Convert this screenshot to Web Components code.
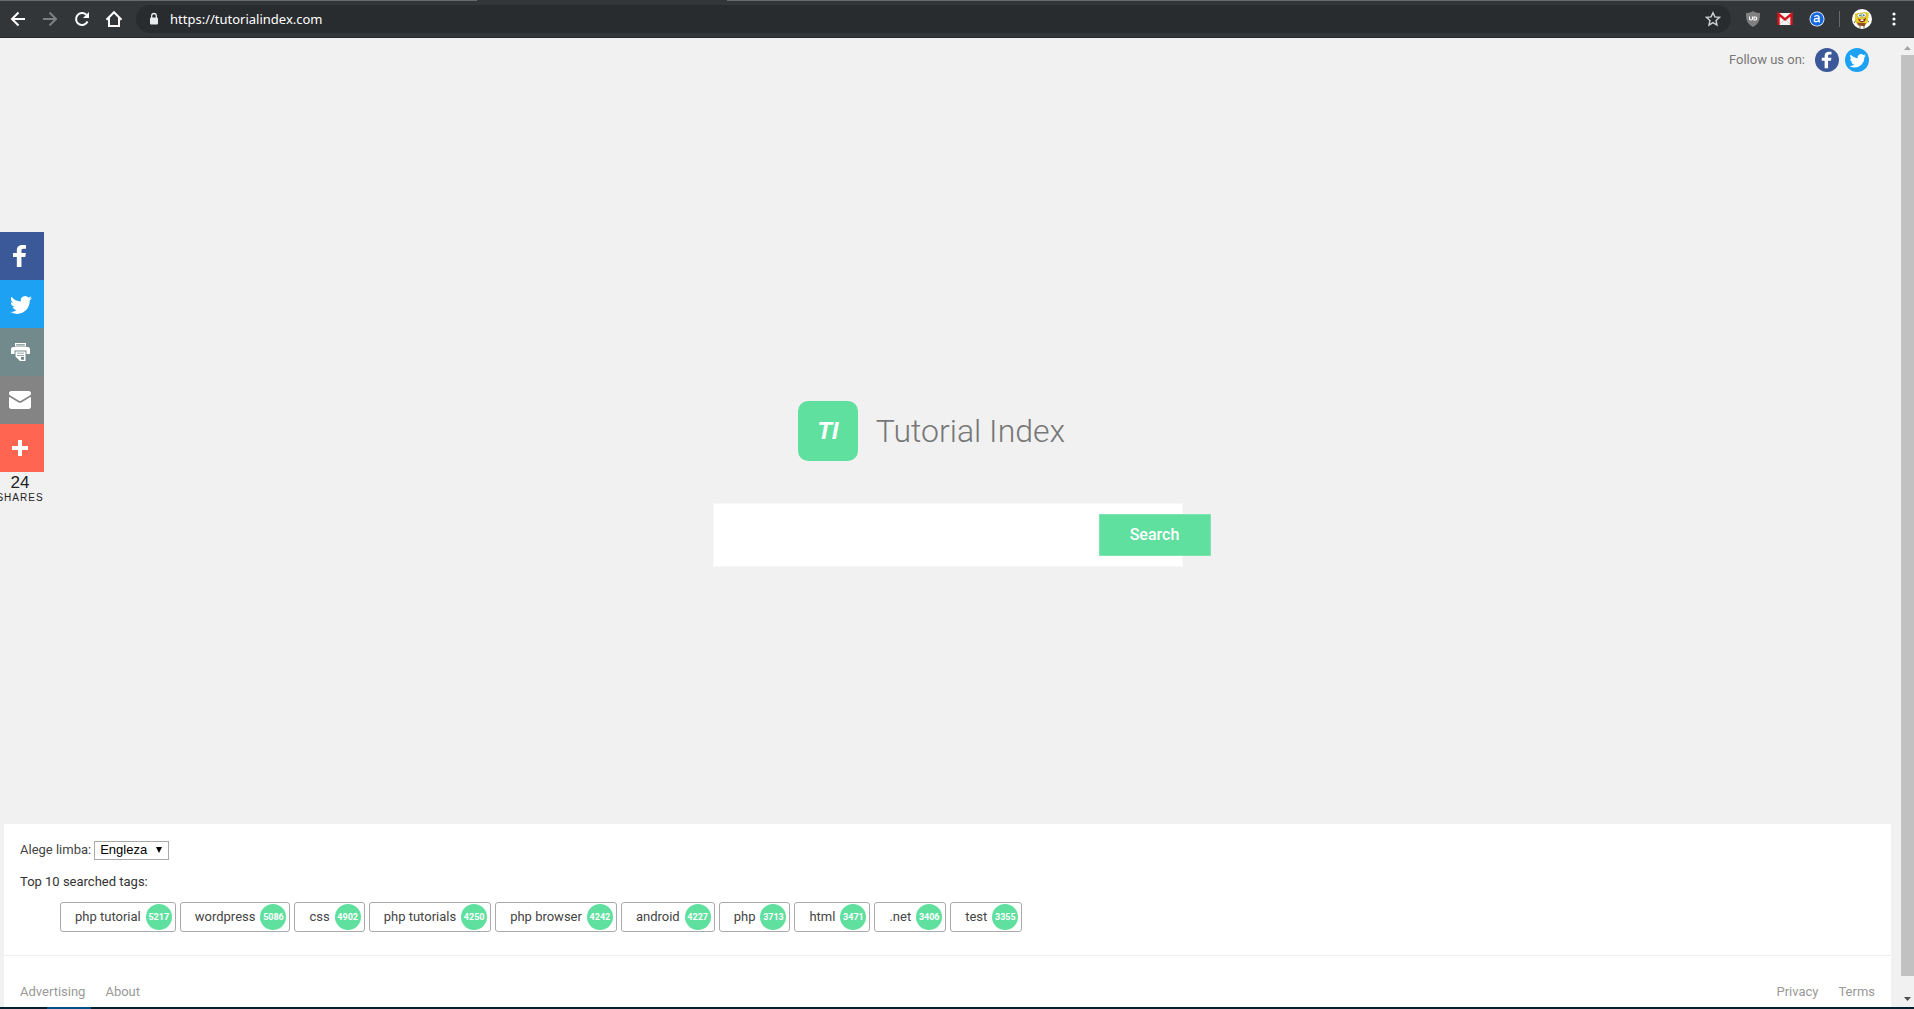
<!DOCTYPE html>
<html lang="en">
<head>
<meta charset="utf-8">
<title>Tutorial Index</title>
<style>
html, body { margin: 0; height: 100%; }
body { font-family: Roboto, "Liberation Sans", sans-serif; font-size: 13px; line-height: 16px; color: #444; background: #f1f1f1; overflow: hidden; --green: #60e09f; }
</style>
</head>
<body>
<app-window></app-window>
<script>
const define = (name, html, setup) => {
  const template = document.createElement('template');
  template.innerHTML = '<style>*{box-sizing:border-box} button{font:inherit;border:0;padding:0;background:none;color:inherit} a{color:inherit;text-decoration:none} svg{display:block}</style>' + html;
  customElements.define(name, class extends HTMLElement {
    constructor() {
      super();
      this.attachShadow({ mode: 'open' }).append(template.content.cloneNode(true));
    }
    connectedCallback() { if (setup) setup(this, this.shadowRoot); }
  });
};

const icons = {
  facebook: '<path d="M22 5.16c-.406-.054-1.806-.16-3.43-.16-3.4 0-5.733 1.825-5.733 5.17v2.882H9v3.913h3.837V27h4.604V16.965h3.823l.587-3.913h-4.41v-2.5c0-1.123.347-1.903 2.198-1.903H22V5.16z"/>',
  twitter: '<path d="M27.996 10.116c-.81.36-1.68.602-2.592.71a4.526 4.526 0 0 0 1.984-2.496 9.037 9.037 0 0 1-2.866 1.095 4.513 4.513 0 0 0-7.69 4.116 12.81 12.81 0 0 1-9.3-4.715 4.49 4.49 0 0 0-.612 2.27 4.51 4.51 0 0 0 2.008 3.755 4.495 4.495 0 0 1-2.044-.564v.057a4.515 4.515 0 0 0 3.62 4.425 4.52 4.52 0 0 1-2.04.077 4.517 4.517 0 0 0 4.217 3.134 9.055 9.055 0 0 1-5.604 1.93A9.18 9.18 0 0 1 6 23.85a12.773 12.773 0 0 0 6.918 2.027c8.3 0 12.84-6.876 12.84-12.84 0-.195-.005-.39-.014-.583a9.172 9.172 0 0 0 2.252-2.336"/>',
  print: '<path fill-rule="evenodd" d="M11 7h11v3.500H11zM12.200 8.200v1.300h8.600V8.200z"/><path fill-rule="evenodd" d="M8.500 11h16L26 12.500V18h-3.500v-3.500h-12V18H7v-5.500z"/><path fill-rule="evenodd" d="M11.500 15.500h10V25H16l-4.500-4.500zM13 16.700v.9h7v-.9zm0 2.200v.9h7v-.9zM17 21v2.700h3V21z"/>',
  email: '<path d="M27 22.757c0 1.24-.988 2.243-2.19 2.243H7.19C5.98 25 5 23.994 5 22.757V13.67c0-.556.39-.773.855-.496l8.78 5.238c.782.467 1.95.467 2.73 0l8.78-5.238c.472-.28.855-.063.855.495v9.087z"/><path d="M27 9.243C27 8.006 26.02 7 24.81 7H7.19C5.988 7 5 8.004 5 9.243v.465c0 .554.385 1.232.857 1.514l9.61 5.733c.267.16.8.16 1.067 0l9.61-5.733c.473-.283.856-.96.856-1.514v-.465z"/>',
  plus: '<path d="M14 8h4v6h6v4h-6v6h-4v-6H8v-4h6z"/>'
};

define('share-icon', `<style>
:host { display: block; width: 32px; height: 32px; }
svg { width: 100%; height: 100%; fill: #fff; }
</style><svg viewBox="0 0 32 32" aria-hidden="true"></svg>`,
  (el, root) => { root.querySelector('svg').innerHTML = icons[el.getAttribute('name')]; });

define('browser-bar', `<style>
:host { display: flex; align-items: center; height: 38px; padding: 1px 4px 0; background: linear-gradient(#323639, #323639) 477px 0 / 250px 1px no-repeat, linear-gradient(#6a6a6a, #6a6a6a) 0 0 / 100% 1px no-repeat #323639; border-bottom: 1px solid #25282a; color: #fff; }
button { flex: none; width: 32px; height: 28px; display: grid; place-items: center; }
button.nav { width: 28px; margin-right: 4px; }
.nav svg { width: 18px; height: 18px; fill: none; stroke: #fff; stroke-width: 2; }
.address { flex: 1; display: flex; align-items: center; height: 28px; margin-left: 4px; padding: 0 2px 0 12px; border-radius: 14px; background: #292c2f; }
input { flex: 1; min-width: 0; margin-left: 10px; padding: 0; border: 0; outline: 0; background: none; color: #fff; font: 13px/18px "Noto Sans", sans-serif; }
.extensions { display: flex; align-items: center; margin-left: 6px; }
.divider { width: 1px; height: 16px; margin: 0 6px; background: #67696b; }
</style>
<button class="nav" aria-label="Back"><svg viewBox="0 0 18 18"><path d="M16 9H3M9.500 2.500L3 9l6.500 6.500"/></svg></button>
<button class="nav" aria-label="Forward"><svg viewBox="0 0 18 18" style="stroke:#7d8082"><path d="M2 9h13M8.500 2.500L15 9l-6.500 6.500"/></svg></button>
<button class="nav" aria-label="Reload"><svg viewBox="0 0 18 18"><path d="M14.500 11.500A6 6 0 1 1 13.300 4.800"/><path d="M16 2v6h-6z" fill="#fff" stroke="none"/></svg></button>
<button class="nav" aria-label="Home"><svg viewBox="0 0 18 18"><path d="M1.500 9.800L9 2.200l7.500 7.600M4 8v8h10V8"/></svg></button>
<div class="address">
<svg width="12" height="14" viewBox="0 0 12 14"><rect x="2" y="5.500" width="8" height="7" rx="1" fill="#e8eaed"/><path d="M3.700 6V3.800a2.300 2.300 0 0 1 4.600 0V6" fill="none" stroke="#e8eaed" stroke-width="1.300"/></svg>
<input aria-label="Address" value="https://tutorialindex.com">
<button aria-label="Bookmark"><svg width="16" height="16" viewBox="0 0 16 16"><path d="M8 1.700l1.900 4.200 4.500.5-3.400 3 1 4.600-4-2.400-4 2.400 1-4.600-3.400-3 4.500-.5z" fill="none" stroke="#d0d2d4" stroke-width="1.400"/></svg></button>
</div>
<div class="extensions">
<button aria-label="Shield"><svg width="16" height="16" viewBox="0 0 16 16"><path d="M8 0c2 1.500 4.500 2 7 2 0 7-1 11-7 14C2 13 1 9 1 2c2.500 0 5-.5 7-2z" fill="#808080"/><path d="M4.500 5.500v2a1.500 1.500 0 0 0 3 0v-2M9 6h1.300a1.500 1.500 0 0 1 0 3H9z" fill="none" stroke="#fff" stroke-width="1.100"/></svg></button>
<button aria-label="Mail"><svg width="16" height="16" viewBox="0 0 16 16"><path d="M1 2h14v12H1z" fill="#f3f3f3"/><path d="M3 13l4-4M13 13L9 9" stroke="#ccc" fill="none"/><path d="M1.500 14V3L8 8.500 14.500 3v11" fill="none" stroke="#d4151c" stroke-width="2.400"/></svg></button>
<button aria-label="Extension"><svg width="16" height="16" viewBox="0 0 16 16"><circle cx="8" cy="8" r="7.500" fill="#fff"/><circle cx="8" cy="8" r="6.700" fill="#1668df"/><path d="M5.500 5.800C6 4.300 10 4 10 6.300v3.500q0 1 1 .9M10 7.500C7.500 7.300 5.300 7.600 5.300 9.200c0 2 3.700 2 4.700-.2" fill="none" stroke="#fff" stroke-width="1.400"/></svg></button>
<span class="divider"></span>
<button aria-label="Profile"><svg width="20" height="20" viewBox="0 0 20 20"><circle cx="10" cy="10" r="10" fill="#fff"/><path d="M3 4.500l12-1.500 2 1.500-1.500 9-3 3L5 15l-2-3z" fill="#e5cf26"/><path d="M5 13.500l9 .7-1.500 3-6.500-.8z" fill="#8e4b24"/><circle cx="7.500" cy="6.500" r="2.300" fill="#fff" stroke="#998a1c" stroke-width=".5"/><circle cx="12" cy="6" r="2.300" fill="#fff" stroke="#998a1c" stroke-width=".5"/><circle cx="8" cy="6.500" r="1" fill="#2c7fae"/><circle cx="11.700" cy="6.200" r="1" fill="#2c7fae"/><path d="M6 9.500q4 2.500 8-.8-.5 4.600-4 4.600-3 0-4-3.800" fill="#932d25"/><path d="M8.500 10.500h3v1.500h-3z" fill="#fff"/><path d="M3.500 12l-1.500 2M15.500 12l1.500 1M8 17v2M12 17v2" stroke="#7f6c20"/></svg></button>
<button aria-label="Menu"><svg width="16" height="16" viewBox="0 0 16 16" fill="#fff"><circle cx="8" cy="3" r="1.600"/><circle cx="8" cy="8" r="1.600"/><circle cx="8" cy="13" r="1.600"/></svg></button>
</div>`);

define('social-links', `<style>
:host { display: flex; justify-content: flex-end; align-items: center; gap: 6px; padding: 10px 32px 10px 0; color: #777; }
span { margin-right: 4px; }
a { display: block; border-radius: 50%; }
share-icon { width: 24px; height: 24px; }
</style><span>Follow us on:</span>
<a href="#facebook" aria-label="Facebook" style="background:#3b5998"><share-icon name="facebook"></share-icon></a>
<a href="#twitter" aria-label="Twitter" style="background:#1da1f2"><share-icon name="twitter"></share-icon></a>`);

define('share-rail', `<style>
:host { display: block; width: 44px; color: #222; }
button { display: flex; align-items: center; width: 44px; height: 48px; padding-left: 4px; }
.count { width: 40px; padding-top: 2px; display: flex; flex-direction: column; align-items: center; font-family: "Liberation Sans", sans-serif; }
b { font-weight: 400; font-size: 17px; line-height: 18px; }
span { font-size: 10px; line-height: 12px; letter-spacing: 1px; }
</style>
<button aria-label="Facebook" style="background:#3b5998"><share-icon name="facebook"></share-icon></button>
<button aria-label="Twitter" style="background:#1da1f2"><share-icon name="twitter"></share-icon></button>
<button aria-label="Print" style="background:#738a8d"><share-icon name="print"></share-icon></button>
<button aria-label="Email" style="background:#848484"><share-icon name="email"></share-icon></button>
<button aria-label="More" style="background:#ff6550"><share-icon name="plus"></share-icon></button>
<div class="count"><b>24</b><span>SHARES</span></div>`);

define('site-brand', `<style>
:host { display: flex; align-items: center; gap: 18px; color: #777; }
.mark { display: grid; place-items: center; width: 60px; height: 60px; border-radius: 10px; background: var(--green); color: #fff; font: italic 700 24px/28px "Liberation Sans", sans-serif; }
h1 { margin: 0; font-weight: 300; font-size: 32px; line-height: 40px; }
</style><span class="mark">TI</span><h1>Tutorial Index</h1>`);

define('search-form', `<style>
:host { display: block; }
form { display: flex; align-items: center; margin-right: -28px; }
input { width: 470px; height: 64px; padding: 0 100px 0 16px; border: 1px solid #f8f8f8; outline: 0; background: #fff; font: inherit; font-size: 16px; }
button { width: 112px; height: 42px; margin-left: -84px; border: 1px solid #7fe4b1; background: var(--green); color: #fff; font-size: 16px; font-weight: 500; }
</style><form onsubmit="return false"><input type="text" aria-label="Search tutorials"><button>Search</button></form>`);

define('tag-chip', `<style>
:host { display: block; }
a { display: flex; align-items: center; gap: 5px; height: 30px; padding: 0 3px 0 14px; border: 1px solid #aaa; border-radius: 3px; }
.n { display: grid; place-items: center; width: 26px; height: 26px; border-radius: 50%; background: var(--green); color: #fff; font-size: 9px; line-height: 12px; font-weight: 700; }
</style><a href="#tag"><slot></slot><span class="n"></span></a>`,
  (el, root) => { root.querySelector('.n').textContent = el.getAttribute('count'); });

define('language-select', `<style>
:host { display: flex; align-items: center; gap: 3px; height: 32px; }
.box { display: grid; align-items: center; }
select, svg { grid-area: 1 / 1; }
select { appearance: none; width: 75px; height: 19px; padding: 0 5px; border: 1px solid #a9a9a9; border-radius: 0; background: #fff; color: #000; font: 13px/16px "Liberation Sans", sans-serif; }
svg { justify-self: end; margin-right: 7px; pointer-events: none; }
</style><label for="lang">Alege limba:</label><span class="box"><select id="lang"><option>Engleza</option><option>Romana</option></select><svg width="6" height="6" viewBox="0 0 6 6"><path d="M0 0h6L3 6z"/></svg></span>`);

define('site-footer', `<style>
:host { display: block; background: #fff; }
.tags-title { margin: 0; line-height: 32px; color: #333; }
.top { padding: 10px 16px 23px; }
.tags { display: flex; flex-wrap: wrap; gap: 4px; margin-top: 4px; padding-left: 40px; }
nav { display: flex; justify-content: space-between; padding: 28px 16px 7px; border-top: 1px solid #eee; color: #999; }
nav div { display: flex; gap: 20px; }
</style>
<div class="top"><language-select></language-select>
<p class="tags-title">Top 10 searched tags:</p>
<div class="tags">
<tag-chip count="5217">php tutorial</tag-chip><tag-chip count="5086">wordpress</tag-chip><tag-chip count="4902">css</tag-chip><tag-chip count="4250">php tutorials</tag-chip><tag-chip count="4242">php browser</tag-chip><tag-chip count="4227">android</tag-chip><tag-chip count="3713">php</tag-chip><tag-chip count="3471">html</tag-chip><tag-chip count="3406">.net</tag-chip><tag-chip count="3355">test</tag-chip>
</div></div>
<nav><div><a href="#advertising">Advertising</a><a href="#about">About</a></div><div><a href="#privacy">Privacy</a><a href="#terms">Terms</a></div></nav>`);

define('page-scrollbar', `<style>
:host { display: flex; flex-direction: column; align-items: center; width: 13px; padding: 8px 0 6px; background: #f1f1f1; }
i { flex: 1; width: 13px; margin: 5px 0 21px; background: #c1c1c1; }
</style><svg width="7" height="4" viewBox="0 0 7 4"><path d="M0 4h7L3.500 0z" fill="#a3a3a3"/></svg><i></i><svg width="7" height="4" viewBox="0 0 7 4"><path d="M0 0h7L3.500 4z" fill="#505050"/></svg>`);

define('app-window', `<style>
:host { display: flex; flex-direction: column; height: 100vh; }
.view { flex: 1; min-height: 0; display: flex; }
.page { flex: 1; min-width: 0; display: flex; flex-direction: column; position: relative; }
share-rail { position: absolute; left: 0; top: 20%; }
main { flex: 1; display: flex; flex-direction: column; align-items: center; justify-content: center; gap: 42px; padding-top: 62px; margin: 0 10px 0 4px; }
site-brand { padding-right: 32px; }
site-footer { margin: 0 10px 0 4px; }
.taskbar { height: 2px; background: linear-gradient(#00508a, #00508a) 47px 0 / 44px 2px no-repeat #05202e; }
</style>
<browser-bar></browser-bar>
<div class="view"><div class="page"><social-links></social-links><share-rail></share-rail>
<main><site-brand></site-brand><search-form></search-form></main>
<site-footer></site-footer></div><page-scrollbar></page-scrollbar></div>
<div class="taskbar"></div>`);
</script>
</body>
</html>
